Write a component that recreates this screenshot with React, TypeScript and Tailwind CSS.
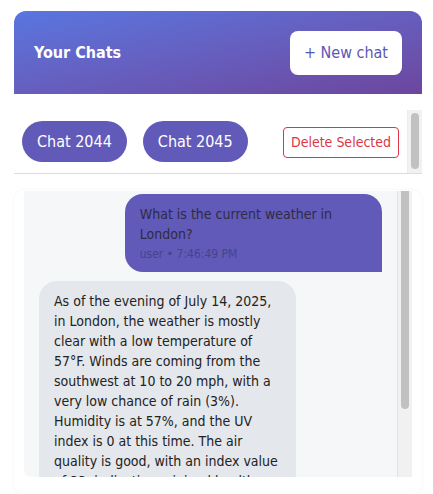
const messages = [
  {
    role: 'user',
    text: 'What is the current weather in London?',
    time: '7:46:49 PM',
  },
  {
    role: 'assistant',
    text: 'As of the evening of July 14, 2025, in London, the weather is mostly clear with a low temperature of 57°F. Winds are coming from the southwest at 10 to 20 mph, with a very low chance of rain (3%). Humidity is at 57%, and the UV index is 0 at this time. The air quality is good, with an index value of 33, indicating minimal health risk. Sunset is at 9:14 PM tonight.',
    time: '7:46:55 PM',
  },
];

const chats = ['Chat 2044', 'Chat 2045'];

export default function App() {
  return (
    <div
      className="min-h-[494px] bg-white pl-[14px] pt-[11px]"
      style={{ fontFamily: "'DejaVu Sans Condensed', 'DejaVu Sans', sans-serif" }}
    >
      <div className="w-[408px]">
        {/* Header */}
        <div className="flex h-[83px] items-center justify-between rounded-t-[12px] bg-gradient-to-br from-[#5876e0] to-[#6c469e] px-5">
          <h2 className="text-[16px] font-bold text-white">Your Chats</h2>
          <button className="h-[44px] rounded-[8px] bg-white px-[14px] text-[16px] text-[#5c57b4]">
            + New chat
          </button>
        </div>

        {/* Chat tabs */}
        <div className="mt-4 flex h-[64px] border-b border-[#dcdcdc] bg-white">
          <div className="flex flex-1 items-start overflow-hidden px-2 pt-[11px]">
            {chats.map((c) => (
              <button
                key={c}
                className="mr-4 h-[41px] rounded-full bg-[#615ab9] px-[15px] text-[16px] text-white"
              >
                {c}
              </button>
            ))}
            <button className="ml-auto mt-[6px] h-[31px] rounded-[4px] border border-[#dc3545] bg-white px-[7px] text-[14px] text-[#dc3545]">
              Delete Selected
            </button>
          </div>
          {/* scrollbar */}
          <div className="w-[15px] border-l border-[#ececec] bg-[#f1f1f1] pt-[3px]">
            <div className="ml-[3px] h-[56px] w-[8px] rounded-full bg-[#c1c1c1]" />
          </div>
        </div>

        {/* Messages card */}
        <div className="mt-4 h-[304px] rounded-[10px] bg-white px-[10px] pt-px shadow-[0_0_3px_rgba(0,0,0,0.06)]">
          <div className="flex h-[286px]">
            <div className="flex-1 overflow-hidden rounded-bl-lg bg-[#f6f7f9] px-[15px] pt-[3px]">
              <div className="flex flex-col gap-[9px]">
                {messages.map((m, i) => (
                  <div key={i} className={m.role === 'user' ? 'flex justify-end' : 'flex justify-start'}>
                    <div
                      className={
                        m.role === 'user'
                          ? 'max-w-[75%] rounded-[18px] rounded-br-none bg-[#615ab9] px-[15px] py-[10px] text-[#2e2c44]'
                          : 'max-w-[75%] rounded-[18px] bg-[#e4e7eb] px-[15px] py-[10px] text-[#222]'
                      }
                    >
                      <div className="text-[14px] leading-[20px]">{m.text}</div>
                      <div
                        className={
                          m.role === 'user'
                            ? 'mt-[2px] text-[12px] leading-[16px] text-[#46448a]'
                            : 'mt-[2px] text-[12px] leading-[16px] text-[#777]'
                        }
                      >
                        {m.role} • {m.time}
                      </div>
                    </div>
                  </div>
                ))}
              </div>
            </div>
            {/* scrollbar */}
            <div className="w-[15px] border-l border-[#e2e2e2] bg-[#f1f1f1]">
              <div className="ml-[3px] h-[218px] w-[8px] rounded-b-full bg-[#c1c1c1]" />
            </div>
          </div>
        </div>
      </div>
    </div>
  );
}
